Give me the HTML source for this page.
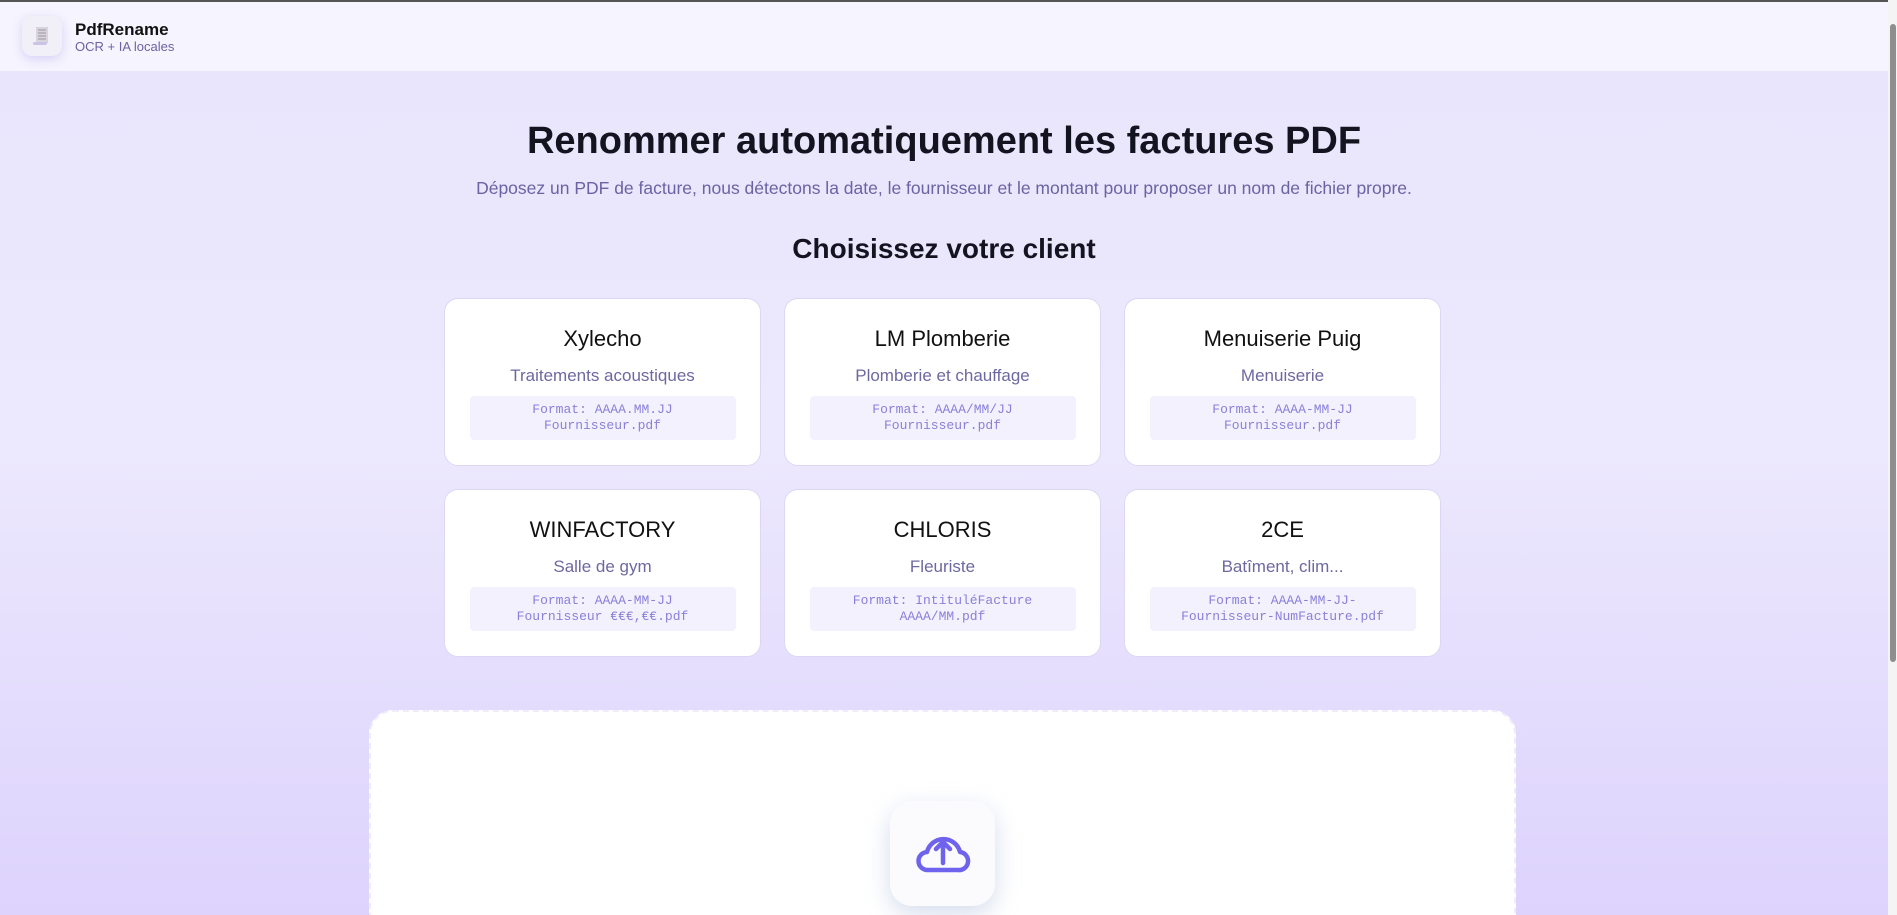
<!DOCTYPE html>
<html><head><meta charset="utf-8"><style>
*{box-sizing:border-box;margin:0;padding:0}
html,body{width:1897px;height:915px;overflow:hidden}
body{font-family:"Liberation Sans",sans-serif;background:#e9e5fc}
#w{position:relative;width:1897px;height:915px;overflow:hidden;background:linear-gradient(#e9e5fc 70px,#ece8fd 450px,#ddd3fd 915px)}
.topline{position:absolute;left:0;top:0;width:1897px;height:2px;background:#555}
header{position:absolute;left:0;top:2px;width:1888px;height:69px;background:#f6f4fe}
.logo{position:absolute;left:22px;top:14px;width:40px;height:40px;border-radius:10px;background:#f1eff8;box-shadow:0 3px 10px rgba(140,130,230,.3)}
.brand{position:absolute;left:75px;top:18px;font-weight:bold;font-size:17px;color:#111}
.sub{position:absolute;left:75px;top:37px;font-size:13px;color:#6b63a3}
h1{position:absolute;top:120px;width:1888px;text-align:center;font-size:38px;font-weight:bold;color:#141420}
.lead{position:absolute;top:178px;width:1888px;text-align:center;font-size:17.5px;color:#6b63a3}
h2{position:absolute;top:233px;width:1888px;text-align:center;font-size:28px;font-weight:bold;color:#141420}
.card{position:absolute;width:317px;height:168px;background:#fff;border:1px solid #ddd7f5;border-radius:14px;text-align:center}
.card .t{margin-top:27px;font-size:22px;color:#111;height:30px}
.card .d{margin-top:10px;font-size:17px;color:#6e68a0}
.card .f{margin:10px auto 0;width:266px;height:44px;background:#f3f1fe;border-radius:4px;font-family:"Liberation Mono",monospace;font-size:13px;color:#8a80d8;line-height:16px;padding-top:6px}
.drop{position:absolute;left:369px;top:710px;width:1147px;height:205px;background:#fff;border:2px dashed #f0ecfc;border-bottom:none;border-radius:24px 24px 0 0}
.up{position:absolute;left:890px;top:801px;width:105px;height:105px;border-radius:22px;background:#fbfbfe;box-shadow:0 8px 24px rgba(150,170,210,.4)}
.sb{position:absolute;left:1888px;top:0;width:9px;height:915px;background:#f4f4f4}
.th{position:absolute;left:1890px;top:24px;width:6px;height:638px;background:#8e8e8e;border-radius:3px}
</style></head><body><div id="w">
<div class="topline"></div>
<header>
<div class="logo"><svg width="40" height="40" viewBox="0 0 40 40"><rect x="14" y="11" width="12" height="16" fill="#d8d4dc"/><g stroke="#9a94a4" stroke-width="1"><line x1="16" y1="14" x2="24" y2="14"/><line x1="16" y1="17" x2="24" y2="17"/><line x1="16" y1="20" x2="24" y2="20"/><line x1="16" y1="23" x2="24" y2="23"/></g><rect x="11" y="26" width="14" height="3" rx="1.5" fill="#cbc4e8"/></svg></div>
<div class="brand">PdfRename</div>
<div class="sub">OCR + IA locales</div>
</header>
<h1>Renommer automatiquement les factures PDF</h1>
<div class="lead">Déposez un PDF de facture, nous détectons la date, le fournisseur et le montant pour proposer un nom de fichier propre.</div>
<h2>Choisissez votre client</h2>

<div class="card" style="left:444px;top:298px"><div class="t">Xylecho</div><div class="d">Traitements acoustiques</div><div class="f">Format: AAAA.MM.JJ<br>Fournisseur.pdf</div></div>
<div class="card" style="left:784px;top:298px"><div class="t">LM Plomberie</div><div class="d">Plomberie et chauffage</div><div class="f">Format: AAAA/MM/JJ<br>Fournisseur.pdf</div></div>
<div class="card" style="left:1124px;top:298px"><div class="t">Menuiserie Puig</div><div class="d">Menuiserie</div><div class="f">Format: AAAA-MM-JJ<br>Fournisseur.pdf</div></div>
<div class="card" style="left:444px;top:489px"><div class="t">WINFACTORY</div><div class="d">Salle de gym</div><div class="f">Format: AAAA-MM-JJ<br>Fournisseur €€€,€€.pdf</div></div>
<div class="card" style="left:784px;top:489px"><div class="t">CHLORIS</div><div class="d">Fleuriste</div><div class="f">Format: IntituléFacture<br>AAAA/MM.pdf</div></div>
<div class="card" style="left:1124px;top:489px"><div class="t">2CE</div><div class="d">Batîment, clim...</div><div class="f">Format: AAAA-MM-JJ-<br>Fournisseur-NumFacture.pdf</div></div>

<div class="drop"></div>
<div class="up"><svg width="105" height="105" viewBox="0 0 105 105" fill="none" stroke="#6f63ee" stroke-width="4.5" stroke-linecap="round" stroke-linejoin="round"><path d="M38 69h30a9 9 0 0 0 2-18 17 17 0 0 0-33 0 9 9 0 0 0 1 18z"/><path d="M53 62V41M46 48l7-7 7 7"/></svg></div>
<div class="sb"></div><div class="th"></div>
</div></body></html>
